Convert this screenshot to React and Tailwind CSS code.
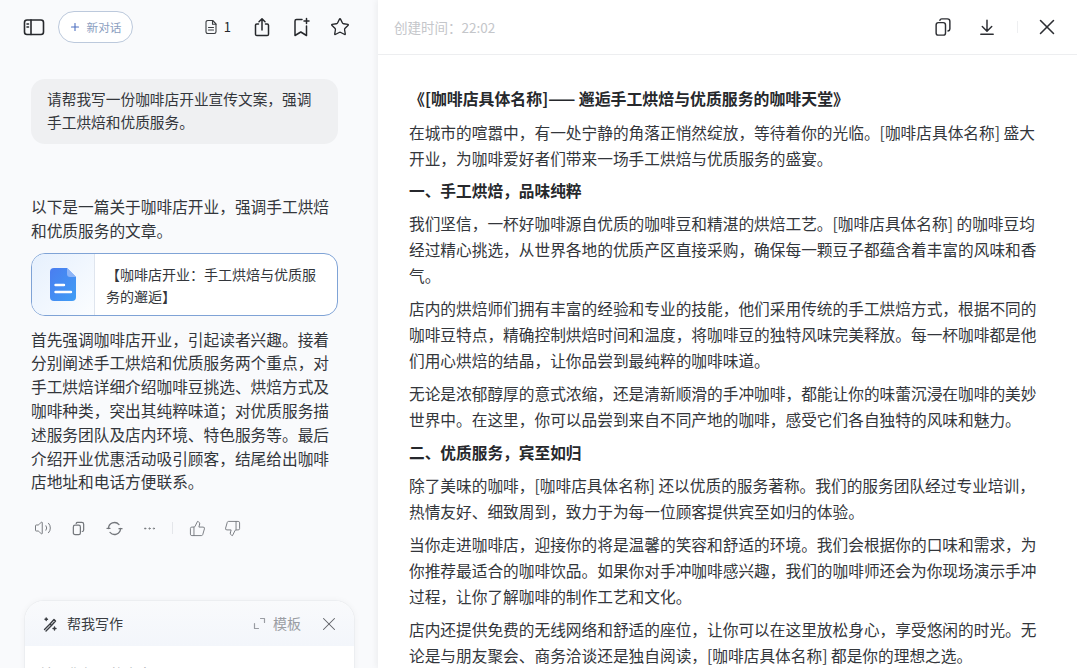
import React from "react";
import { Plus, Star, Volume2, ThumbsUp, ThumbsDown, X, Ellipsis } from "lucide-react";

const S = ({ size = 20, className = "", children, sw = 1.5, vb = 20 }) => (
  <svg width={size} height={size} viewBox={`0 0 ${vb} ${vb}`} fill="none" stroke="currentColor" strokeWidth={sw} strokeLinecap="round" strokeLinejoin="round" className={className}>{children}</svg>
);
const Copy = ({ size = 16, sw = 1.3 }) => (
  <S size={size} vb={16} sw={sw}>
    <rect x="2.5" y="4.5" width="7.5" height="10" rx="1.8" />
    <path d="M5.5 2.6 A1.6 1.6 0 0 1 7 1.5 h4.5 A2 2 0 0 1 13.5 3.5 v6 A1.8 1.8 0 0 1 12 11.2" />
  </S>
);

function Top() {
  return (
    <div className="flex items-center h-[54px] pl-[23px] pr-[28px] shrink-0">
      <S size={22} vb={22} sw={1.6} className="text-[#26282c]">
        <rect x="1.5" y="4" width="19" height="14.5" rx="2.5" />
        <path d="M8 4v14.5" />
        <path d="M4 8h1.5M4 11h1.5" />
      </S>
      <div className="ml-[13px] flex items-center h-[32px] w-[75px] justify-center gap-[5px] rounded-full border border-[#bcc9dc] bg-white text-[#8ca0bf] text-[11.7px]">
        <Plus size={12} strokeWidth={2.2} className="text-[#4d6fc0]" />
        <span>新对话</span>
      </div>
      <div className="ml-auto flex items-center text-[#26282c]">
        <S size={16} vb={16} sw={1.1} className="text-[#3a3c40]">
          <path d="M3 3.2A1.7 1.7 0 0 1 4.7 1.5h5L13 5v7.8a1.7 1.7 0 0 1-1.7 1.7H4.7A1.7 1.7 0 0 1 3 12.8Z" />
          <path d="M9.5 1.5V5.2H13M5.5 8.5h5M5.5 11h5" />
        </S>
        <span className="ml-[5px] text-[13px]">1</span>
        <S size={20} vb={20} sw={1.5} className="ml-[21px]">
          <path d="M6.5 7H4.8A1.3 1.3 0 0 0 3.5 8.3v9A1.3 1.3 0 0 0 4.8 18.5h10.4a1.3 1.3 0 0 0 1.3-1.3v-9A1.3 1.3 0 0 0 15.2 7H13.5" />
          <path d="M10 13V2M7 4.7 10 1.8l3 2.9" />
        </S>
        <S size={20} vb={20} sw={1.5} className="ml-[19px]">
          <path d="M11 2.5H5.5A1.5 1.5 0 0 0 4 4v14.5l5.8-3.5 5.7 3.5V9" />
          <path d="M15.5 1.5v5M13 4h5" />
        </S>
        <Star size={20} strokeWidth={1.6} className="ml-[19px]" />
      </div>
    </div>
  );
}

function Left() {
  return (
    <div className="w-[378px] shrink-0 h-full bg-[#f9fafc] flex flex-col relative text-[15.7px] leading-[23.8px] text-[#33363b] overflow-hidden">
      <Top />
      <div className="shrink-0 mt-[25px] ml-[31px] w-[307px] h-[65px] rounded-[14px] bg-[#eff0f2] pl-[16px] pt-[8px] whitespace-nowrap text-[14.7px] leading-[23px]">
        请帮我写一份咖啡店开业宣传文案，强调<br />手工烘焙和优质服务。
      </div>
      <div className="shrink-0 mt-[51px] ml-[31px] whitespace-nowrap">
        以下是一篇关于咖啡店开业，强调手工烘焙<br />和优质服务的文章。
      </div>
      <div className="shrink-0 mt-[10px] ml-[31px] w-[307px] h-[63px] rounded-[14px] border border-[#7fa3d6] bg-white flex overflow-hidden">
        <div className="w-[63px] shrink-0 border-r border-[#dfe5ee] bg-gradient-to-br from-[#e6f0fd] to-[#fbfdff] flex items-center justify-center">
          <svg width="26" height="33" viewBox="0 0 26 33">
            <defs>
              <linearGradient id="doc" x1="0" y1="0" x2="1" y2="1">
                <stop offset="0" stopColor="#4a7df0" />
                <stop offset="1" stopColor="#3f9df5" />
              </linearGradient>
            </defs>
            <path d="M4 0H17L26 9V29a4 4 0 0 1-4 4H4a4 4 0 0 1-4-4V4a4 4 0 0 1 4-4Z" fill="url(#doc)" />
            <path d="M17 0 26 9H20a3 3 0 0 1-3-3Z" fill="#8db4f7" />
            <path d="M5.5 17H14M5.5 24H21" stroke="#fff" strokeWidth="2.4" strokeLinecap="round" />
          </svg>
        </div>
        <div className="pl-[11px] pt-[9px] whitespace-nowrap text-[14px] leading-[22px]">
          【咖啡店开业：手工烘焙与优质服<br />务的邂逅】
        </div>
      </div>
      <div className="shrink-0 mt-[12px] ml-[31px] whitespace-nowrap">
        首先强调咖啡店开业，引起读者兴趣。接着<br />
        分别阐述手工烘焙和优质服务两个重点，对<br />
        手工烘焙详细介绍咖啡豆挑选、烘焙方式及<br />
        咖啡种类，突出其纯粹味道；对优质服务描<br />
        述服务团队及店内环境、特色服务等。最后<br />
        介绍开业优惠活动吸引顾客，结尾给出咖啡<br />
        店地址和电话方便联系。
      </div>
      <div className="shrink-0 mt-[25px] ml-[34px] flex items-center text-[#74777c]">
        <Volume2 size={18} strokeWidth={1.3} />
        <span className="ml-[19px]"><Copy size={15} /></span>
        <S size={17} vb={17} sw={1.3} className="ml-[20px]">
          <path d="M2.5 8.5A6 6 0 0 1 13 4.6M14.5 8.5A6 6 0 0 1 4 12.4" />
          <path d="M1 8.3h3M13 8.7h3" />
        </S>
        <Ellipsis size={15} strokeWidth={1.5} className="ml-[19px]" />
        <span className="ml-[15px] w-px h-[12px] bg-[#e4e6ea]" />
        <ThumbsUp size={17} strokeWidth={1.3} className="ml-[16px]" />
        <ThumbsDown size={17} strokeWidth={1.3} className="ml-[18px]" />
      </div>
      <div className="mt-[63px] ml-[24px] w-[331px] h-[110px] shrink-0 rounded-t-[20px] border border-[#eceef1] bg-white shadow-[0_0_6px_rgba(0,0,0,0.04)] overflow-hidden">
        <div className="h-[45px] flex items-center pl-[17px] pr-[14px] text-[14px] text-[#3a3d42] bg-gradient-to-b from-[#f9fafc] to-[#f3f6fb]">
          <S size={16} vb={16} sw={1.4}>
            <path d="M2.5 13.5 8 8l1.5 1.5-5.5 5.5M8 8l4-4.5 1.5 1.5-4 4.5" />
            <path d="M3 3.2h2.5M4.2 2v2.5M12.5 11v3M11 12.5h3" />
          </S>
          <span className="ml-[9px]">帮我写作</span>
          <div className="ml-auto flex items-center text-[#9a9da3]">
            <S size={13} vb={13} sw={1.2}>
              <path d="M1.5 6.5v5h4M7.5 1.5h4v4" />
            </S>
            <span className="ml-[7px]">模板</span>
            <X size={22} strokeWidth={1.1} className="ml-[17px] text-[#5f6267]" />
          </div>
        </div>
        <div className="pl-[15px] pt-[16px] text-[14px] text-[#aeb1b6]">输入你想写的内容</div>
      </div>
    </div>
  );
}

const P = ({ children }) => <p className="mb-[6.9px] whitespace-nowrap">{children}</p>;
const H = ({ children }) => <p className="mb-[6.9px] whitespace-nowrap font-bold text-[#26282c]">{children}</p>;

function Right() {
  return (
    <div className="flex-1 h-full bg-white flex flex-col shadow-[-2px_0_6px_rgba(0,0,0,0.05)] relative overflow-hidden">
      <div className="h-[55px] shrink-0 border-b border-[#edeef0] flex items-center pl-[16px] pr-[17px]">
        <span className="text-[13.5px] text-[#c4c6ca]">创建时间：22:02</span>
        <div className="ml-auto flex items-center text-[#2c2e33]">
          <Copy size={20} sw={1.15} />
          <S size={18} vb={16} sw={1.3} className="ml-[25px]">
            <path d="M8 2v9.5M3.8 7.5 8 11.7l4.2-4.2M2.5 14.5h11" />
          </S>
          <span className="ml-[21px] w-px h-[12px] bg-[#eeeff1]" />
          <X size={26} strokeWidth={1.4} className="ml-[16px]" />
        </div>
      </div>
      <div className="pl-[31px] pt-[31px] text-[15.7px] leading-[26px] text-[#33363b]">
        <p className="mb-[7.5px] font-bold text-[#26282c] whitespace-nowrap text-[15.9px]">《[咖啡店具体名称]—— 邂逅手工烘焙与优质服务的咖啡天堂》</p>
        <P>在城市的喧嚣中，有一处宁静的角落正悄然绽放，等待着你的光临。[咖啡店具体名称] 盛大<br />开业，为咖啡爱好者们带来一场手工烘焙与优质服务的盛宴。</P>
        <H>一、手工烘焙，品味纯粹</H>
        <P>我们坚信，一杯好咖啡源自优质的咖啡豆和精湛的烘焙工艺。[咖啡店具体名称] 的咖啡豆均<br />经过精心挑选，从世界各地的优质产区直接采购，确保每一颗豆子都蕴含着丰富的风味和香<br />气。</P>
        <P>店内的烘焙师们拥有丰富的经验和专业的技能，他们采用传统的手工烘焙方式，根据不同的<br />咖啡豆特点，精确控制烘焙时间和温度，将咖啡豆的独特风味完美释放。每一杯咖啡都是他<br />们用心烘焙的结晶，让你品尝到最纯粹的咖啡味道。</P>
        <P>无论是浓郁醇厚的意式浓缩，还是清新顺滑的手冲咖啡，都能让你的味蕾沉浸在咖啡的美妙<br />世界中。在这里，你可以品尝到来自不同产地的咖啡，感受它们各自独特的风味和魅力。</P>
        <H>二、优质服务，宾至如归</H>
        <P>除了美味的咖啡，[咖啡店具体名称] 还以优质的服务著称。我们的服务团队经过专业培训，<br />热情友好、细致周到，致力于为每一位顾客提供宾至如归的体验。</P>
        <P>当你走进咖啡店，迎接你的将是温馨的笑容和舒适的环境。我们会根据你的口味和需求，为<br />你推荐最适合的咖啡饮品。如果你对手冲咖啡感兴趣，我们的咖啡师还会为你现场演示手冲<br />过程，让你了解咖啡的制作工艺和文化。</P>
        <P>店内还提供免费的无线网络和舒适的座位，让你可以在这里放松身心，享受悠闲的时光。无<br />论是与朋友聚会、商务洽谈还是独自阅读，[咖啡店具体名称] 都是你的理想之选。</P>
      </div>
    </div>
  );
}

export default function App() {
  return (
    <div className="w-[1077px] h-[668px] overflow-hidden flex bg-white" style={{ fontFamily: '"Noto Sans CJK SC", "Noto Sans", sans-serif' }}>
      <Left />
      <Right />
    </div>
  );
}
